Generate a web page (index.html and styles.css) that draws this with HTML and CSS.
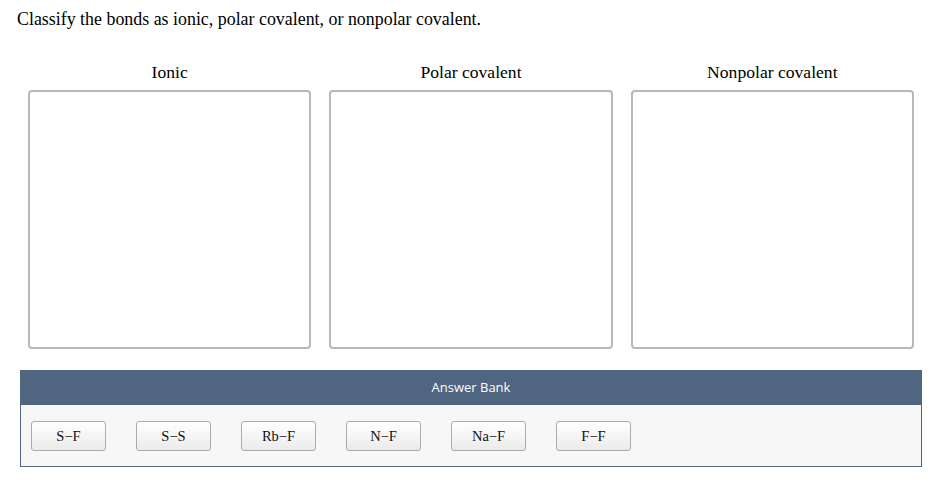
FILE: index.html
```html
<!DOCTYPE html>
<html>
<head>
<meta charset="utf-8">
<link rel="stylesheet" href="styles.css">
</head>
<body>
<div class="page">
  <p class="prompt">Classify the bonds as ionic, polar covalent, or nonpolar covalent.</p>
  <div class="bins">
    <div class="bin">
      <div class="bin-title">Ionic</div>
      <div class="bin-drop"></div>
    </div>
    <div class="bin">
      <div class="bin-title">Polar covalent</div>
      <div class="bin-drop"></div>
    </div>
    <div class="bin">
      <div class="bin-title">Nonpolar covalent</div>
      <div class="bin-drop"></div>
    </div>
  </div>
  <div class="bank">
    <div class="bank-head">Answer Bank</div>
    <div class="bank-body">
      <div class="chip">S−F</div>
      <div class="chip">S−S</div>
      <div class="chip">Rb−F</div>
      <div class="chip">N−F</div>
      <div class="chip">Na−F</div>
      <div class="chip">F−F</div>
    </div>
  </div>
</div>
</body>
</html>
```

FILE: styles.css
```css
html, body {
  margin: 0;
  padding: 0;
  background: #ffffff;
}
.page {
  width: 933px;
  font-family: "Liberation Serif", "Times New Roman", serif;
  color: #000;
}
.prompt {
  margin: 0;
  padding: 8px 0 0 17px;
  font-size: 17.9px;
  line-height: 22px;
}
.bins {
  display: flex;
  gap: 18px;
  margin: 32px 0 0 28px;
  width: 886px;
}
.bin {
  flex: 1;
  display: flex;
  flex-direction: column;
}
.bin-title {
  text-align: center;
  font-size: 17.6px;
  line-height: 20px;
  height: 20px;
  margin-bottom: 8px;
}
.bin-drop {
  height: 255px;
  border: 2px solid #b8b8b8;
  border-radius: 4px;
  background: #fff;
}
.bank {
  margin: 21px 0 0 20px;
  width: 902px;
}
.bank-head {
  height: 35px;
  background: #506580;
  color: #ffffff;
  font-family: "Open Sans", "Liberation Sans", sans-serif;
  font-size: 13px;
  line-height: 35px;
  text-align: center;
}
.bank-body {
  display: flex;
  gap: 30px;
  padding: 16px 10px 15px 10px;
  background: #f7f7f7;
  border: 1px solid #506580;
  border-top: none;
}
.chip {
  width: 73px;
  height: 28px;
  border: 1px solid #ababab;
  border-radius: 3px;
  background: linear-gradient(#ffffff, #ebebeb);
  font-size: 14.5px;
  line-height: 28px;
  text-align: center;
  color: #111;
}
```
